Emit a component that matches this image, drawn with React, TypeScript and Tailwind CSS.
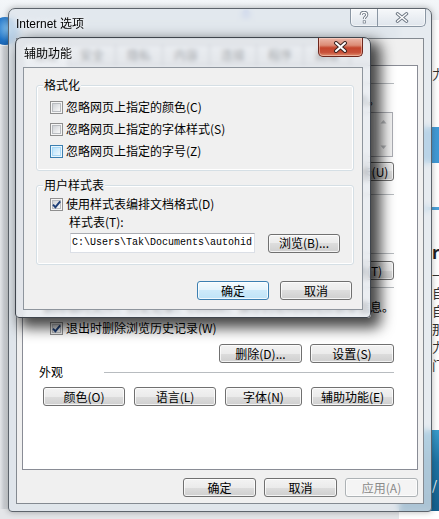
import type { ReactNode } from "react";

const tabs = ["常规", "安全", "隐私", "内容", "连接", "程序", "高级"];

function Btn({
  children,
  className = "",
  kind = "normal",
}: {
  children: ReactNode;
  className?: string;
  kind?: "normal" | "default" | "disabled";
}) {
  const skin =
    kind === "default"
      ? "border-[#3c7fb1] bg-[linear-gradient(#f4fbfe_0%,#e3f3fc_50%,#cdeafa_50%,#bfe3f7_100%)] text-black"
      : kind === "disabled"
        ? "border-[#adb2b5] bg-[#f4f4f4] text-[#8a8a8a]"
        : "border-[#707070] bg-[linear-gradient(#f3f3f3_0%,#ebebeb_50%,#dddddd_50%,#cfcfcf_100%)] text-black";
  return (
    <div
      className={`flex h-[19px] shrink-0 items-center justify-center rounded-[3px] border text-[12px] leading-none shadow-[inset_0_0_0_1px_rgba(255,255,255,0.75)] ${skin} ${className}`}
    >
      {children}
    </div>
  );
}

function Box({ checked = false, hot = false }: { checked?: boolean; hot?: boolean }) {
  return (
    <span
      className={`relative flex h-[13px] w-[13px] shrink-0 items-center justify-center border ${
        hot ? "border-[#3c7fb1] bg-[#eaf6fd]" : "border-[#8f8f8f] bg-[#f5f5f5]"
      }`}
    >
      <span
        className={`h-[9px] w-[9px] border ${
          hot
            ? "border-[#a7d8f7] bg-[linear-gradient(135deg,#b9e2fb,#eef8fe)]"
            : "border-[#b9bcc0] bg-[linear-gradient(135deg,#cfd2d6,#f9f9f9)]"
        }`}
      />
      {checked && (
        <svg className="absolute left-0 top-0" width="11" height="11" viewBox="0 0 11 11">
          <path d="M2 5.6 L4.4 8.2 L9.2 2.4" fill="none" stroke="#1e3f78" strokeWidth="1.9" />
        </svg>
      )}
    </span>
  );
}

function Radio({ on = false }: { on?: boolean }) {
  return (
    <span className="flex h-[13px] w-[13px] shrink-0 items-center justify-center rounded-full border border-[#8f8f8f] bg-[linear-gradient(135deg,#d6d9dc,#fafafa)]">
      {on && <span className="h-[5px] w-[5px] rounded-full bg-[#1e4f9a]" />}
    </span>
  );
}

function CheckRow({ label, checked, hot }: { label: string; checked?: boolean; hot?: boolean }) {
  return (
    <div className="flex h-[16px] items-center gap-[3px]">
      <Box checked={checked} hot={hot} />
      <span className="whitespace-nowrap">{label}</span>
    </div>
  );
}

function GroupLine({ label }: { label: string }) {
  return (
    <div className="flex h-[14px] items-center">
      <span className="min-w-[65px] pr-[4px] leading-[14px]">{label}</span>
      <div className="h-px flex-1 bg-[#b8bcc0] shadow-[0_1px_0_#ffffff]" />
    </div>
  );
}

function CaptionButtons() {
  return (
    <div className="flex h-[18px] overflow-hidden rounded-b-[5px] border border-t-0 border-[#8a96a3] bg-[linear-gradient(#f6f8fa,#dfe5ec)] shadow-[inset_0_0_0_1px_rgba(255,255,255,0.6)]">
      <div className="flex w-[27px] items-center justify-center border-r border-[#8a96a3]">
        <svg width="10" height="13" viewBox="0 0 10 13">
          <path d="M2.2 4 C2.2 2.2 3.5 1.3 5 1.3 C6.7 1.3 7.8 2.3 7.8 3.8 C7.8 5.6 5.3 5.8 5.3 8" fill="none" stroke="#6f7985" strokeWidth="3" />
          <path d="M2.2 4 C2.2 2.2 3.5 1.3 5 1.3 C6.7 1.3 7.8 2.3 7.8 3.8 C7.8 5.6 5.3 5.8 5.3 8" fill="none" stroke="#ffffff" strokeWidth="1.2" />
          <rect x="3.8" y="9.4" width="3" height="3" fill="#6f7985" />
          <rect x="4.5" y="10.1" width="1.6" height="1.6" fill="#ffffff" />
        </svg>
      </div>
      <div className="flex w-[47px] items-center justify-center">
        <svg width="14" height="11" viewBox="0 0 14 11">
          <path d="M2.5 1.8 L11.5 9.2 M11.5 1.8 L2.5 9.2" stroke="#6f7985" strokeWidth="3.4" strokeLinecap="round" />
          <path d="M2.5 1.8 L11.5 9.2 M11.5 1.8 L2.5 9.2" stroke="#ffffff" strokeWidth="1.4" strokeLinecap="round" />
        </svg>
      </div>
    </div>
  );
}

function RedClose() {
  return (
    <div className="ml-auto flex h-[19px] w-[45px] items-center justify-center rounded-b-[5px] border border-t-0 border-[#6e261c] bg-[linear-gradient(#ecb7a9_0%,#dc8c76_40%,#c4452c_55%,#c8513a_80%,#e0906f_100%)] shadow-[inset_0_0_0_1px_rgba(255,225,215,0.45)]">
      <svg width="15" height="12" viewBox="0 0 15 12">
        <path d="M3 2 L12 10 M12 2 L3 10" stroke="#3b2420" strokeWidth="4" strokeLinecap="round" />
        <path d="M3 2 L12 10 M12 2 L3 10" stroke="#ffffff" strokeWidth="2" strokeLinecap="round" />
      </svg>
    </div>
  );
}

function Desktop() {
  return (
    <>
      <div className="absolute inset-x-0 top-0 h-[60px] bg-[linear-gradient(#f3f6f9,#e2e7ec)]" />
      <div className="absolute left-[-9px] top-[17px] h-[28px] w-[28px] rounded-full bg-[radial-gradient(circle_at_65%_40%,#8ccaf7,#2073c6_55%,#0f4d96)]" />
      <div className="absolute left-[242px] top-[10px] h-[8px] w-[8px] rounded-full bg-[#9aa9ee]" />
      <div className="absolute bottom-0 left-0 top-[46px] w-[10px] bg-[linear-gradient(90deg,#e3e5e8,#c9cdd2_40%,#dcdfe2)]" />
      <div className="absolute inset-x-0 bottom-0 h-[10px] bg-[#e4e6e9]" />
      <div className="absolute bottom-0 right-0 top-[20px] flex w-[40px] flex-col bg-white pl-[33px] font-['Noto_Sans_CJK_SC',sans-serif] text-[13px] leading-[14px] text-[#333]">
        <span className="mt-[47px]">力</span>
        <div className="-ml-[33px] mt-[46px] h-[36px] bg-[linear-gradient(90deg,#6fb6e6,#3d98d5)]" />
        <div className="-ml-[33px] mt-[44px] h-[3px] bg-[#4aa0d8]" />
        <span className="mt-[34px] text-[17px] font-bold leading-[16px] text-[#222]">r</span>
        <span className="mt-[10px] leading-[10px]">一</span>
        <span className="mt-[6px]">自</span>
        <span className="mt-[4px]">自</span>
        <span className="mt-[4px]">那</span>
        <span className="mt-[4px]">力</span>
        <span className="mt-[4px]">门</span>
        <div className="-ml-[33px] mt-[58px] flex h-[81px] flex-col bg-[linear-gradient(#3a9ccc,#1d73a3_40%,#15608e)] pl-[33px] pt-[48px] text-white">
          <span>/</span>
        </div>
      </div>
    </>
  );
}

function OuterWindow() {
  return (
    <div className="absolute left-[8px] top-[8px] flex h-[504px] w-[424px] flex-col rounded-t-[7px] rounded-b-[4px] border border-[#5d646c] bg-[#dde4eb]/75 px-[7px] pb-[7px] shadow-[0_0_6px_rgba(0,0,0,0.3)] backdrop-blur-[3px]">
      <div className="-mx-[7px] flex h-[29px] items-start pl-[7px] pr-[5px]">
        <span className="mt-[8px] font-['Liberation_Sans','Noto_Sans_CJK_SC',sans-serif] text-[12px] leading-[14px] [text-shadow:0_0_6px_#ffffff]">
          Internet 选项
        </span>
        <div className="ml-auto">
          <CaptionButtons />
        </div>
      </div>

      <div className="flex flex-1 flex-col border border-[#848a91] bg-[#f0f0f0] px-[5px] pb-[6px]">
        <div className="mt-[5px] flex h-[21px] items-end">
          {tabs.map((t, i) => (
            <div
              key={t}
              className={
                i === 0
                  ? "relative z-10 -mb-px flex h-[23px] w-[47px] items-center justify-center border border-b-0 border-[#898c95] bg-white"
                  : "flex h-[21px] w-[47px] items-center justify-center border border-l-0 border-b-0 border-[#898c95] bg-[linear-gradient(#fbfbfb,#e4e4e4)]"
              }
            >
              {t}
            </div>
          ))}
        </div>

        <div className="flex flex-1 flex-col border border-[#898c95] bg-white pl-[16px] pr-[23px]">
          <div className="mt-[10px]">
            <GroupLine label="主页" />
          </div>
          <div className="mt-[2px] flex h-[16px] justify-end pr-[14px] whitespace-nowrap">
            若要创建多个主页选项卡，请在各行键入地址(R)。
          </div>
          <div className="ml-[11px] mr-[1px] mt-[4px] flex h-[45px] border border-[#abadb3] bg-white">
            <div className="flex-1 pl-[3px] pt-[2px] text-[#000]">http://www.google.com.hk/</div>
            <div className="flex w-[17px] flex-col justify-between bg-[#f4f4f4] py-[6px]">
              <svg width="17" height="5" viewBox="0 0 17 5">
                <path d="M5.5 4.5 L8.5 1 L11.5 4.5 Z" fill="#b7b9bc" />
              </svg>
              <svg width="17" height="5" viewBox="0 0 17 5">
                <path d="M5.5 0.5 L8.5 4 L11.5 0.5 Z" fill="#b7b9bc" />
              </svg>
            </div>
          </div>
          <div className="mt-[5px] flex justify-end gap-[7px]">
            <Btn className="w-[96px]">使用当前页(C)</Btn>
            <Btn className="w-[96px]">使用默认值(F)</Btn>
            <Btn className="w-[100px]">使用新选项卡(U)</Btn>
          </div>

          <div className="mt-[6px]">
            <GroupLine label="启动" />
          </div>
          <div className="ml-[11px] mt-[3px] flex h-[16px] items-center gap-[3px]">
            <Radio />
            <span>从上次会话中的选项卡开始(B)</span>
          </div>
          <div className="ml-[11px] mt-[4px] flex h-[16px] items-center gap-[3px]">
            <Radio on />
            <span>从主页开始(H)</span>
          </div>

          <div className="mt-[6px]">
            <GroupLine label="选项卡" />
          </div>
          <div className="mt-[1px] flex h-[19px] items-center justify-between pl-[11px]">
            <span>更改网页在选项卡中的显示方式。</span>
            <Btn className="w-[75px]">选项卡(T)</Btn>
          </div>

          <GroupLine label="浏览历史记录" />
          <div className="mt-[5px] flex h-[16px] justify-end whitespace-nowrap">
            删除临时文件、历史记录、Cookie、保存的密码和网页表单信息。
          </div>
          <div className="ml-[11px] mt-[5px]">
            <CheckRow label="退出时删除浏览历史记录(W)" checked />
          </div>
          <div className="mt-[8px] flex justify-end gap-[8px]">
            <Btn className="w-[83px]">删除(D)...</Btn>
            <Btn className="w-[84px]">设置(S)</Btn>
          </div>

          <div className="mt-[2px]">
            <GroupLine label="外观" />
          </div>
          <div className="ml-[4px] mt-[8px] flex gap-[9px]">
            <Btn className="w-[82px]">颜色(O)</Btn>
            <Btn className="w-[82px]">语言(L)</Btn>
            <Btn className="w-[77px]">字体(N)</Btn>
            <Btn className="w-[83px]">辅助功能(E)</Btn>
          </div>
        </div>

        <div className="mt-[8px] flex justify-end gap-[8px]">
          <Btn className="w-[73px]">确定</Btn>
          <Btn className="w-[73px]">取消</Btn>
          <Btn className="w-[73px]" kind="disabled">
            应用(A)
          </Btn>
        </div>
      </div>
    </div>
  );
}

function AccessibilityDialog() {
  return (
    <div className="absolute left-[15px] top-[37px] z-10 flex h-[281px] w-[356px] flex-col rounded-t-[7px] rounded-b-[4px] border border-[#3f454d] bg-[#e2e7ec]/70 px-[7px] pb-[7px] shadow-[7px_7px_14px_3px_rgba(0,0,0,0.72)] backdrop-blur-[2px]">
      <div className="flex h-[29px] items-start">
        <span className="ml-[1px] mt-[8px] leading-[14px] [text-shadow:0_0_6px_#ffffff]">辅助功能</span>
        <RedClose />
      </div>

      <div className="flex flex-1 flex-col border border-[#8e959d] bg-[#f0f0f0] pl-[12px] pr-[8px] pt-[10px]">
        <fieldset className="rounded-[3px] border border-[#d5dfe5] pb-[11px] pl-[6px] shadow-[inset_0_0_0_1px_#ffffff]">
          <legend className="bg-[#f0f0f0] px-[1px] leading-[14px]">格式化</legend>
          <div className="ml-[7px] mt-[7px] flex flex-col gap-[6px]">
            <CheckRow label="忽略网页上指定的颜色(C)" />
            <CheckRow label="忽略网页上指定的字体样式(S)" />
            <CheckRow label="忽略网页上指定的字号(Z)" hot />
          </div>
        </fieldset>

        <fieldset className="mt-[7px] rounded-[3px] border border-[#d5dfe5] pb-[11px] pl-[6px] shadow-[inset_0_0_0_1px_#ffffff]">
          <legend className="bg-[#f0f0f0] px-[1px] leading-[14px]">用户样式表</legend>
          <div className="ml-[7px] mt-[4px]">
            <CheckRow label="使用样式表编排文档格式(D)" checked />
          </div>
          <div className="ml-[26px] mt-[2px] h-[16px]">样式表(T):</div>
          <div className="ml-[27px] mt-[3px] flex items-center gap-[13px]">
            <div className="flex h-[20px] w-[185px] items-center overflow-hidden border border-[#dbdfe6] border-t-[#abadb3] bg-white pl-[1px] font-['Liberation_Mono',monospace] text-[10px] whitespace-nowrap">
              C:\Users\Tak\Documents\autohid
            </div>
            <Btn className="w-[72px]">浏览(B)...</Btn>
          </div>
        </fieldset>

        <div className="mr-[2px] mt-[16px] flex justify-end gap-[11px]">
          <Btn className="w-[72px]" kind="default">
            确定
          </Btn>
          <Btn className="w-[72px]">取消</Btn>
        </div>
      </div>
    </div>
  );
}

export default function App() {
  return (
    <div className="relative h-[519px] w-[439px] overflow-hidden bg-[#e6e9ec] font-['Noto_Sans_CJK_SC',sans-serif] text-[12px] leading-[16px] text-black">
      <Desktop />
      <OuterWindow />
      <AccessibilityDialog />
    </div>
  );
}
